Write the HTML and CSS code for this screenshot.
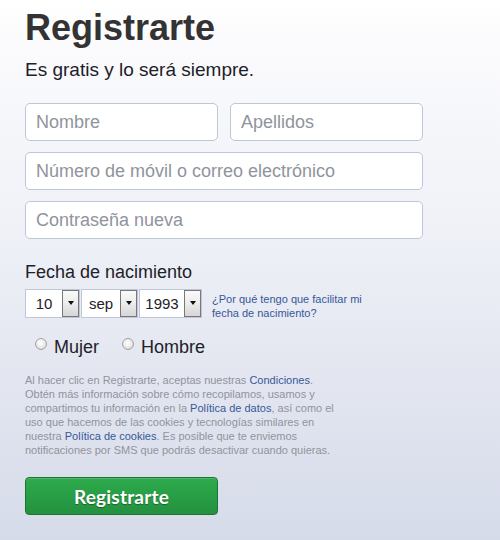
FILE: index.html
```html
<!DOCTYPE html>
<html lang="es">
<head>
<meta charset="utf-8">
<title>Registrarte</title>
<link rel="stylesheet" href="styles.css">
</head>
<body>
<div class="page">
  <h1 class="title">Registrarte</h1>
  <p class="subtitle">Es gratis y lo será siempre.</p>
  <form class="form">
    <div class="fields">
      <div class="row">
        <input class="input" type="text" placeholder="Nombre">
        <input class="input" type="text" placeholder="Apellidos">
      </div>
      <input class="input" type="text" placeholder="Número de móvil o correo electrónico">
      <input class="input" type="password" placeholder="Contraseña nueva">
    </div>
    <div class="label">Fecha de nacimiento</div>
    <div class="dob">
      <div class="selects">
        <div class="select sel-day"><span class="sel-value">10</span><span class="sel-btn"><span class="tri"></span></span></div>
        <div class="select sel-month"><span class="sel-value">sep</span><span class="sel-btn"><span class="tri"></span></span></div>
        <div class="select sel-year"><span class="sel-value">1993</span><span class="sel-btn"><span class="tri"></span></span></div>
      </div>
      <a class="why" href="#">¿Por qué tengo que facilitar mi fecha de nacimiento?</a>
    </div>
    <div class="gender">
      <label class="radio"><span class="dot"></span><span class="radio-text">Mujer</span></label>
      <label class="radio"><span class="dot"></span><span class="radio-text">Hombre</span></label>
    </div>
    <p class="terms">Al hacer clic en Registrarte, aceptas nuestras <a href="#">Condiciones</a>. Obtén más información sobre cómo recopilamos, usamos y compartimos tu información en la <a href="#">Política de datos</a>, así como el uso que hacemos de las cookies y tecnologías similares en nuestra <a href="#">Política de cookies</a>. Es posible que te enviemos notificaciones por SMS que podrás desactivar cuando quieras.</p>
    <button class="submit" type="button">Registrarte</button>
  </form>
</div>
</body>
</html>
```

FILE: styles.css
```css
html, body {
  margin: 0;
  padding: 0;
}
body {
  width: 500px;
  height: 540px;
  overflow: hidden;
  font-family: "Liberation Sans", Arial, sans-serif;
  background: linear-gradient(to bottom, #ffffff 0px, #fbfbfd 40px, #eff1f7 230px, #e5e8f1 350px, #d6dbea 540px);
}
.page {
  padding: 10px 0 0 25px;
}
.title {
  margin: 0;
  font-size: 36px;
  line-height: 36px;
  font-weight: 700;
  color: #333333;
}
.subtitle {
  margin: 12px 0 0;
  font-size: 19px;
  line-height: 24px;
  color: #1d2129;
}
.form {
  margin: 0;
}
.fields {
  margin-top: 21px;
  width: 398px;
  display: flex;
  flex-direction: column;
  gap: 11px;
}
.row {
  display: flex;
  gap: 12px;
}
.input {
  box-sizing: border-box;
  display: block;
  width: 100%;
  height: 38px;
  margin: 0;
  padding: 0 10px;
  border: 1px solid #bdc7d8;
  border-radius: 5px;
  background: #ffffff;
  font-family: "Liberation Sans", Arial, sans-serif;
  font-size: 18px;
  color: #1d2129;
  outline: none;
}
.row .input {
  flex: 1 1 0;
  min-width: 0;
}
.input::placeholder {
  color: #90949c;
  opacity: 1;
}
.label {
  margin-top: 22px;
  font-size: 18px;
  line-height: 22px;
  color: #1d2129;
}
.dob {
  margin-top: 6px;
  display: flex;
  align-items: flex-start;
}
.selects {
  display: flex;
  gap: 1px;
}
.select {
  box-sizing: border-box;
  height: 29px;
  border: 1px solid #bdc7d8;
  background: #ffffff;
  display: flex;
}
.sel-day { width: 55px; }
.sel-month { width: 57px; }
.sel-year { width: 63px; }
.sel-value {
  flex: 1 1 auto;
  text-align: center;
  font-size: 15px;
  line-height: 27px;
  color: #1d2129;
}
.sel-btn {
  box-sizing: border-box;
  width: 17px;
  height: 27px;
  border: 1px solid #787878;
  background: linear-gradient(to bottom, #fafafa 0%, #ececec 50%, #d6d6d6 100%);
  display: flex;
  align-items: center;
  justify-content: center;
}
.tri {
  width: 0;
  height: 0;
  border-left: 3.5px solid transparent;
  border-right: 3.5px solid transparent;
  border-top: 4px solid #111111;
  margin-top: -1px;
}
.why {
  margin: 3px 0 0 10px;
  width: 170px;
  font-size: 11px;
  line-height: 14px;
  color: #365899;
  text-decoration: none;
}
.gender {
  margin-top: 16px;
  padding-left: 10px;
  display: flex;
  gap: 23px;
}
.radio {
  display: flex;
  align-items: flex-start;
  gap: 7px;
}
.dot {
  box-sizing: border-box;
  width: 12px;
  height: 12px;
  margin-top: 2px;
  border-radius: 50%;
  border: 1px solid #a3a3a3;
  background: radial-gradient(circle at 45% 40%, #ffffff 0%, #f2f2f2 35%, #cfcfcf 100%);
}
.radio-text {
  font-size: 18px;
  line-height: 22px;
  color: #1d2129;
}
.terms {
  margin: 15px 0 0;
  width: 316px;
  font-size: 11px;
  line-height: 14px;
  color: #90949c;
}
.terms a {
  color: #365899;
  text-decoration: none;
}
.submit {
  display: block;
  box-sizing: border-box;
  margin-top: 20px;
  width: 193px;
  height: 38px;
  padding: 0;
  border: 1px solid #1c7430;
  border-radius: 4px;
  background: linear-gradient(to bottom, #2eaa4c 0%, #28a046 45%, #25903f 100%);
  box-shadow: inset 0 1px 0 rgba(255, 255, 255, 0.18);
  font-family: Lato, "Open Sans", sans-serif;
  font-weight: 700;
  font-size: 19px;
  letter-spacing: 0.2px;
  color: #ffffff;
  text-shadow: 0 1px 1px rgba(0, 0, 0, 0.35);
  cursor: pointer;
}
```
